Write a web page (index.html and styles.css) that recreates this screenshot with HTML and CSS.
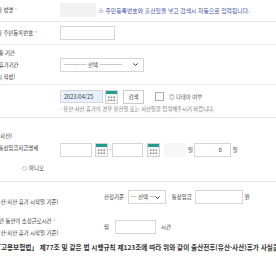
FILE: index.html
```html
<!DOCTYPE html>
<html lang="ko">
<head>
  <meta charset="UTF-8" />
  <meta name="viewport" content="width=device-width, initial-scale=1.0" />
  <title>출산전후휴가 급여 신청</title>
  <link rel="stylesheet" href="styles.css">
</head>
<body>
  <div class="form">
    <div class="row r1">
      <div class="th"><div class="lbl">배우자 성명 <span class="req">*</span></div></div>
      <div class="td">
        <input type="text" class="field ro w36" readonly>
        <span class="hint">※ 주민등록번호와 출산일을 넣고 검색시 자동으로 입력됩니다.</span>
      </div>
    </div>

    <div class="row r2">
      <div class="th"><div class="lbl">배우자 주민등록번호 <span class="req">*</span></div></div>
      <div class="td">
        <input type="text" class="field w55">
      </div>
    </div>

    <div class="row r3">
      <div class="th"><div class="lbl">휴가 총 기간<br>(유산휴가기간<br>해당시 작성)</div></div>
      <div class="td">
        <div class="select lg">
          <span>------------ 선택 ------------</span>
          <svg class="chev" width="5" height="3" viewBox="0 0 5 3"><path d="M0.5 0.5 L2.5 2.5 L4.5 0.5" fill="none" stroke="#333" stroke-width="1"/></svg>
        </div>
      </div>
    </div>

    <div class="row r4">
      <div class="th"><div class="lbl">일자</div></div>
      <div class="td stack">
        <div class="line">
          <input type="text" class="field date" value="2023/04/25">
          <svg class="cal" width="13" height="14" viewBox="0 0 13 14">
            <rect x="0.5" y="0.5" width="12" height="13" fill="#f4f4f4" stroke="#d0d0d0"/>
            <rect x="1" y="1" width="11" height="3" fill="#1f9e8f"/>
            <g fill="#8a8a8a"><rect x="3" y="6.5" width="1.5" height="1.5"/><rect x="5.75" y="6.5" width="1.5" height="1.5"/><rect x="8.5" y="6.5" width="1.5" height="1.5"/><rect x="3" y="9.5" width="1.5" height="1.5"/><rect x="5.75" y="9.5" width="1.5" height="1.5"/><rect x="8.5" y="9.5" width="1.5" height="1.5"/></g>
          </svg>
          <button class="btn">검색</button>
          <input type="checkbox" class="check" id="multi">
          <label class="check-label" for="multi">◎ 다태아 여부</label>
        </div>
        <p class="note">- 유산·사산 휴가의 경우 유산일 또는 사산일을 입력해주시기 바랍니다.</p>
      </div>
    </div>

    <div class="row r5">
      <div class="th top">
        <div class="lbl">(유산·사산)<br>휴가 통상임금지급명세</div>
        <div class="radios">
          <label><span class="radio"></span>예</label>
          <label><span class="radio"></span>아니오</label>
        </div>
      </div>
      <div class="td">
        <input type="text" class="field w32">
        <svg class="cal c1" width="13" height="14" viewBox="0 0 13 14">
          <rect x="0.5" y="0.5" width="12" height="13" fill="#f4f4f4" stroke="#d0d0d0"/>
          <rect x="1" y="1" width="11" height="3" fill="#1f9e8f"/>
          <g fill="#8a8a8a"><rect x="3" y="6.5" width="1.5" height="1.5"/><rect x="5.75" y="6.5" width="1.5" height="1.5"/><rect x="8.5" y="6.5" width="1.5" height="1.5"/><rect x="3" y="9.5" width="1.5" height="1.5"/><rect x="5.75" y="9.5" width="1.5" height="1.5"/><rect x="8.5" y="9.5" width="1.5" height="1.5"/></g>
        </svg>
        <span class="dash">-</span>
        <input type="text" class="field w31">
        <svg class="cal c2" width="13" height="14" viewBox="0 0 13 14">
          <rect x="0.5" y="0.5" width="12" height="13" fill="#f4f4f4" stroke="#d0d0d0"/>
          <rect x="1" y="1" width="11" height="3" fill="#1f9e8f"/>
          <g fill="#8a8a8a"><rect x="3" y="6.5" width="1.5" height="1.5"/><rect x="5.75" y="6.5" width="1.5" height="1.5"/><rect x="8.5" y="6.5" width="1.5" height="1.5"/><rect x="3" y="9.5" width="1.5" height="1.5"/><rect x="5.75" y="9.5" width="1.5" height="1.5"/><rect x="8.5" y="9.5" width="1.5" height="1.5"/></g>
        </svg>
        <span class="blank"></span>
        <span class="unit">일</span>
        <input type="text" class="field w37 num" value="0">
        <span class="unit">일</span>
      </div>
    </div>

    <div class="row r6 plain">
      <div class="th wide bottom"><div class="lbl">(유산·사산 휴가 시작일 기준)</div></div>
      <div class="td">
        <span>산정기준</span>
        <div class="select sm">
          <span>--- 선택 ---</span>
          <svg class="chev" width="5" height="3" viewBox="0 0 5 3"><path d="M0.5 0.5 L2.5 2.5 L4.5 0.5" fill="none" stroke="#333" stroke-width="1"/></svg>
        </div>
        <span class="pay">통상임금</span>
        <input type="text" class="field w48">
        <span class="unit">원</span>
      </div>
    </div>

    <div class="row r7 plain">
      <div class="th wide"><div class="lbl">기간 동안의 소정근로시간 <span class="req">*</span><br>(유산·사산 휴가 시작일 기준)</div></div>
      <div class="td">
        <span>월</span>
        <input type="text" class="field w41 hours">
        <span class="unit">시간</span>
      </div>
    </div>

    <p class="notice">「고용보험법」 제77조 및 같은 법 시행규칙 제123조에 따라 위와 같이 출산전후(유산·사산)휴가 사실을 확인하고 급여를 신청합니다.</p>
  </div>
</body>
</html>
```

FILE: styles.css
```css
* { margin: 0; padding: 0; box-sizing: border-box; }
html, body { height: 100%; overflow: hidden; }
body {
  font-family: "Noto Sans CJK KR", "Noto Sans", sans-serif;
  font-size: 5.4px;
  color: #333;
  background: #fff;
}

/* page is cut off on the left, labels start outside the window */
.form { margin: -1px 0 0 -13px; }

.row { display: flex; border-bottom: 1px solid #e7e7e7; }
.row.plain { border-bottom: none; }
.r1, .r2 { height: 23px; }
.r3 { height: 40px; }
.r4 { height: 33px; }
.r5 { height: 64px; }
.r6, .r7 { height: 30px; }

.th {
  flex: none;
  width: 70px;
  display: flex;
  flex-direction: column;
  justify-content: center;
  line-height: 12px;
  white-space: nowrap;
}
.th.wide { width: 113px; padding-left: 7px; }
.th.top { justify-content: flex-start; padding-top: 12px; }
.th.bottom { justify-content: flex-end; padding-bottom: 4px; }
.req { color: #f39c12; }

.td {
  flex: 1;
  min-width: 0;
  display: flex;
  align-items: center;
  padding-left: 3px;
  white-space: nowrap;
}
.th.wide + .td { padding-left: 4px; }
.td.stack { flex-direction: column; align-items: flex-start; justify-content: center; }
.line { display: flex; align-items: center; }

.field {
  height: 14px;
  border: 1px solid #d6d6d6;
  background: #fff;
  font: inherit;
  color: #333;
  padding: 0 3px;
  outline: none;
}
.field.ro { background: #f2f2f2; border-color: #f2f2f2; }
.w31 { width: 31px; }
.w32 { width: 32px; }
.w36 { width: 36px; }
.w37 { width: 37px; }
.w41 { width: 41px; }
.w48 { width: 48px; }
.w55 { width: 55px; }
.num { text-align: right; padding-right: 8px; }

.hint { margin-left: 2px; color: #3f4fae; font-size: 5.85px; }

.select {
  height: 14px;
  border: 1px solid #d6d6d6;
  background: #fff;
  display: flex;
  align-items: center;
  justify-content: space-between;
  padding: 0 5px 0 3px;
  overflow: hidden;
}
.select.lg { width: 84px; }
.select.sm { width: 38px; margin-left: 4px; padding-left: 2px; }
.chev { display: block; flex: none; }

.date { width: 43px; height: 13px; background: #e8f0fe; font-size: 5.6px; }
.cal { display: block; flex: none; margin-left: 2px; }
.cal.c1 { margin-left: 3px; }
.cal.c2 { margin-left: 4px; }
.btn {
  width: 21px;
  height: 14px;
  margin-left: 5px;
  border: 1px solid #ccc;
  background: #fff;
  font: inherit;
  color: #333;
}
.check {
  appearance: none;
  width: 9px;
  height: 9px;
  margin-left: 11px;
  border: 1px solid #aaa;
  background: #fff;
}
.check-label { margin-left: 5px; color: #555; }
.note { margin-top: 2px; line-height: 7px; color: #777; font-size: 5.35px; }

.radios { display: flex; align-items: center; margin-top: 8px; }
.radios label { display: flex; align-items: center; margin-right: 23px; }
.radio {
  width: 5px;
  height: 5px;
  margin-right: 2px;
  border: 1px solid #c4c4c4;
  border-radius: 50%;
}

.dash { margin: 0 1px; }
.blank { width: 22px; height: 14px; margin-left: 4px; background: #f7f7f7; }
.unit { margin: 0 1px 0 2px; }
.pay { margin-left: 6px; margin-right: 3px; }
.hours { margin-left: 6px; margin-right: 3px; }

.notice {
  padding-left: 7.4px;
  line-height: 10px;
  font-size: 6.6px;
  font-weight: bold;
  color: #333;
  white-space: nowrap;
}
```
